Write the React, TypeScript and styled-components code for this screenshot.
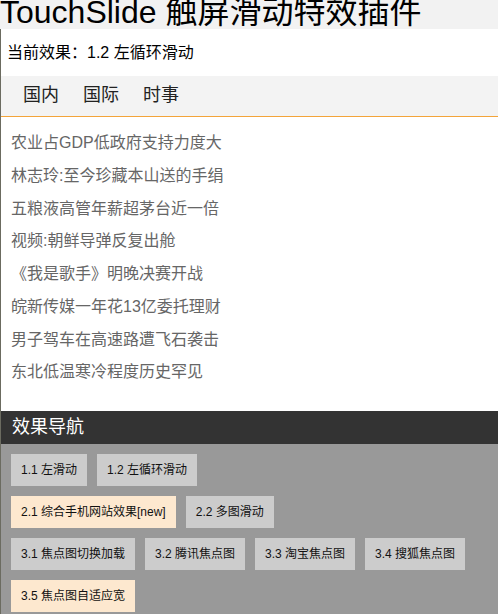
import React, { FC } from 'react'
import styled, { createGlobalStyle } from 'styled-components'

const GlobalStyle = createGlobalStyle`
  html, body {
    margin: 0;
    padding: 0;
    background: #fff;
  }
  body {
    font-family: "Liberation Sans", Arial, "Noto Sans CJK SC", sans-serif;
  }
`

const Header = styled.header`
  height: 29px;
  overflow: hidden;
  background: #f2f2f2;
`

const Title = styled.h1`
  margin: 0;
  font-size: 32px;
  font-weight: normal;
  line-height: 25px;
  color: #000;
  white-space: nowrap;
`

const Page = styled.div`
  border-left: 1px solid #6b6b60;
`

const Current = styled.p`
  margin: 0;
  height: 47px;
  padding-left: 6px;
  font-size: 16px;
  line-height: 47px;
  color: #000;
`

const TabBar = styled.ul`
  display: flex;
  margin: 0;
  padding: 0 0 0 10px;
  list-style: none;
  height: 40px;
  background: #f3f3f3;
  border-bottom: 1px solid #f3a43a;
`

const Tab = styled.li`
  padding: 0 12px;
  font-size: 18px;
  line-height: 38px;
  color: #222;
`

const News = styled.ul`
  margin: 0;
  padding: 10px 0 22px 10px;
  list-style: none;
`

const NewsItem = styled.li`
  height: 32.75px;
  font-size: 16px;
  line-height: 32px;
  color: #666;
  white-space: nowrap;
`

const NavTitle = styled.h2`
  margin: 0;
  height: 33px;
  padding-left: 11px;
  background: #333;
  color: #fff;
  font-size: 18px;
  font-weight: normal;
  line-height: 32px;
`

const NavPanel = styled.div`
  display: flex;
  flex-direction: column;
  gap: 10px;
  padding: 10px;
  background: #999;
`

const NavGroup = styled.div`
  display: flex;
  flex-wrap: wrap;
  gap: 10px;
`

const NavButton = styled.a<{ $hot?: boolean }>`
  display: block;
  height: 32px;
  padding: 0 10px;
  font-size: 12px;
  line-height: 32px;
  color: #111;
  text-decoration: none;
  background: ${(p) => (p.$hot ? '#fde8cf' : '#ccc')};
  white-space: nowrap;
`

const news = [
  '农业占GDP低政府支持力度大',
  '林志玲:至今珍藏本山送的手绢',
  '五粮液高管年薪超茅台近一倍',
  '视频:朝鲜导弹反复出舱',
  '《我是歌手》明晚决赛开战',
  '皖新传媒一年花13亿委托理财',
  '男子驾车在高速路遭飞石袭击',
  '东北低温寒冷程度历史罕见',
]

const groups: { label: string; hot?: boolean }[][] = [
  [{ label: '1.1 左滑动' }, { label: '1.2 左循环滑动' }],
  [{ label: '2.1 综合手机网站效果[new]', hot: true }, { label: '2.2 多图滑动' }],
  [
    { label: '3.1 焦点图切换加载' },
    { label: '3.2 腾讯焦点图' },
    { label: '3.3 淘宝焦点图' },
    { label: '3.4 搜狐焦点图' },
    { label: '3.5 焦点图自适应宽', hot: true },
  ],
]

const App: FC = () => {
  return (
    <>
      <GlobalStyle />
      <Header>
        <Title>TouchSlide 触屏滑动特效插件</Title>
      </Header>
      <Page>
        <Current>当前效果：1.2 左循环滑动</Current>
        <TabBar>
          <Tab>国内</Tab>
          <Tab>国际</Tab>
          <Tab>时事</Tab>
        </TabBar>
        <News>
          {news.map((n) => (
            <NewsItem key={n}>{n}</NewsItem>
          ))}
        </News>
        <NavTitle>效果导航</NavTitle>
        <NavPanel>
          {groups.map((g, i) => (
            <NavGroup key={i}>
              {g.map((b) => (
                <NavButton key={b.label} $hot={b.hot} href="#">
                  {b.label}
                </NavButton>
              ))}
            </NavGroup>
          ))}
        </NavPanel>
      </Page>
    </>
  )
}

export default App
